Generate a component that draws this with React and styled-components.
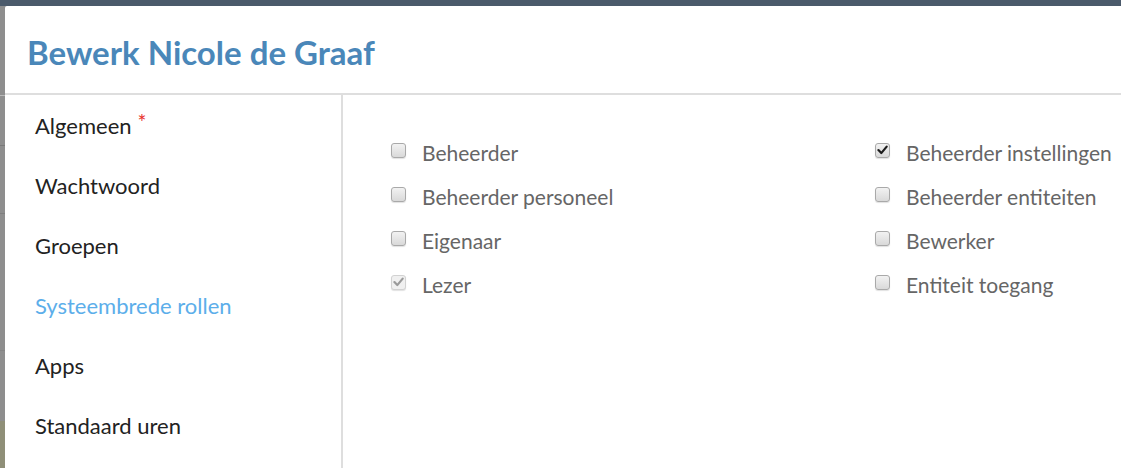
import React from "react";
import styled, { createGlobalStyle } from "styled-components";

const Global = createGlobalStyle`
  html, body { margin: 0; padding: 0; }
  body {
    width: 1121px;
    height: 468px;
    overflow: hidden;
    background: #8d8d8d;
    font-family: Lato, "Open Sans", "Liberation Sans", sans-serif;
  }
`;

const Page = styled.div`
  display: grid;
  grid-template-columns: 5px 1fr;
  grid-template-rows: 6px 1fr;
  width: 1121px;
  height: 468px;
  overflow: hidden;
`;

const TopBar = styled.div`
  grid-column: 1 / 3;
  background: #4b5a6b;
`;

const Backdrop = styled.div`
  display: flex;
  flex-direction: column;
  background: #8e8e8e;
`;

const BackdropCell = styled.div`
  height: ${(p) => p.$h}px;
  flex: ${(p) => (p.$grow ? 1 : "none")};
  background: ${(p) => p.$bg || "transparent"};
  border-bottom: 1px solid ${(p) => p.$line || "transparent"};
`;

const Modal = styled.div`
  background: #fff;
  width: 1300px;
  display: flex;
  flex-direction: column;
  border-top-left-radius: 2px;
`;

const Header = styled.div`
  height: 89px;
  box-sizing: border-box;
  padding: 26px 0 0 22px;
  border-bottom: 2px solid #dedede;
`;

const Title = styled.h2`
  margin: 0;
  font-family: Lato, "Liberation Sans", sans-serif;
  font-weight: 700;
  font-size: 33px;
  line-height: 40px;
  color: #4a87b9;
`;

const Body = styled.div`
  display: flex;
  flex: 1;
`;

const Sidebar = styled.nav`
  flex: none;
  width: 336px;
  border-right: 2px solid #dedede;
  padding-top: 11px;
  display: flex;
  flex-direction: column;
`;

const NavItem = styled.div`
  height: 60px;
  line-height: 40px;
  padding-left: 30px;
  font-size: 22px;
  color: ${(p) => (p.$active ? "#5caeea" : "#222")};
`;

const Required = styled.span`
  color: #e8332c;
  font-size: 21px;
  vertical-align: top;
  margin-left: 6px;
  line-height: 32px;
`;

const Content = styled.div`
  flex: none;
  padding: 43px 0 0 48px;
  display: grid;
  grid-template-columns: 484px 484px;
  grid-template-rows: repeat(4, 44px);
  grid-auto-flow: column;
  align-content: start;
`;

const Option = styled.label`
  display: flex;
  align-items: center;
  gap: 16px;
  font-size: 21px;
  color: #666;
  height: 28px;
`;

const Box = styled.span`
  width: 15px;
  height: 15px;
  box-sizing: border-box;
  border: 1px solid ${(p) => (p.$disabled ? "#d2d2d2" : "#a9a9a9")};
  border-radius: 3px;
  background: ${(p) =>
    p.$disabled ? "#f0f0f0" : "linear-gradient(#f2f2f2, #d9d9d9)"};
  box-shadow: 0 1px 1px rgba(0, 0, 0, 0.12);
  display: flex;
  align-items: center;
  justify-content: center;
  margin-top: -4px;
  flex: none;
`;

const Check = ({ color }) => (
  <svg width="11" height="10" viewBox="0 0 10 9">
    <path d="M1.3 4.6 L3.9 7.3 L8.8 1.4" fill="none" stroke={color} strokeWidth="2" strokeLinecap="round" strokeLinejoin="round" />
  </svg>
);

const Checkbox = ({ checked, disabled }) => (
  <Box $disabled={disabled}>
    {checked && <Check color={disabled ? "#9a9a9a" : "#1c1c1c"} />}
  </Box>
);

const navItems = [
  { label: "Algemeen", required: true },
  { label: "Wachtwoord" },
  { label: "Groepen" },
  { label: "Systeembrede rollen", active: true },
  { label: "Apps" },
  { label: "Standaard uren" },
];

const roles = [
  { label: "Beheerder" },
  { label: "Beheerder personeel" },
  { label: "Eigenaar" },
  { label: "Lezer", checked: true, disabled: true },
  { label: "Beheerder instellingen", checked: true },
  { label: "Beheerder entiteiten" },
  { label: "Bewerker" },
  { label: "Entiteit toegang" },
];

export default function App() {
  return (
    <>
      <Global />
      <Page>
        <TopBar />
        <Backdrop>
          <BackdropCell $h={89} $line="#b9b9b9" />
          <BackdropCell $h={49} $line="#7a7a7a" />
          <BackdropCell $h={67} $line="#7f7f7f" />
          <BackdropCell $h={136} $line="#858585" />
          <BackdropCell $h={69} />
          <BackdropCell $grow $bg="#8f8f78" />
        </Backdrop>
        <Modal>
          <Header>
            <Title>Bewerk Nicole de Graaf</Title>
          </Header>
          <Body>
            <Sidebar>
              {navItems.map((n) => (
                <NavItem key={n.label} $active={n.active}>
                  {n.label}
                  {n.required && <Required>*</Required>}
                </NavItem>
              ))}
            </Sidebar>
            <Content>
              {roles.map((r) => (
                <Option key={r.label}>
                  <Checkbox checked={r.checked} disabled={r.disabled} />
                  {r.label}
                </Option>
              ))}
            </Content>
          </Body>
        </Modal>
      </Page>
    </>
  );
}
